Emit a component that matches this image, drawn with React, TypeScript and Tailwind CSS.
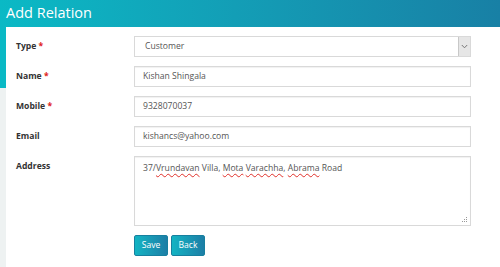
import React from "react";

const Squiggle = ({ children }: { children: React.ReactNode }) => (
  <span className="underline decoration-wavy decoration-[#e0302a] decoration-1 underline-offset-2">{children}</span>
);

function Label({ text, req }: { text: string; req?: boolean }) {
  return (
    <div className="h-[21px] flex items-center text-[8.6px] font-bold text-[#333] whitespace-pre">
      {text}
      {req && <span className="text-[#e02020]"> *</span>}
    </div>
  );
}

function Input({ value }: { value: string }) {
  return (
    <div className="h-[21px] w-[337px] border border-[#d9d9d9] bg-white shadow-[inset_0_1px_1px_rgba(0,0,0,0.06)] flex items-center px-[8px] text-[8.6px] text-[#555]">
      {value}
    </div>
  );
}

export default function App() {
  return (
    <div className="w-[500px] h-[267px] overflow-hidden flex flex-col bg-white" style={{ fontFamily: '"Open Sans", sans-serif' }}>
      <header className="h-[27px] shrink-0 bg-gradient-to-r from-[#0ab9c5] to-[#1880a5] flex items-center px-[6px]">
        <h1 className="text-white text-[14.5px] leading-none">Add Relation</h1>
      </header>
      <div className="flex flex-1">
        <div className="w-[6px] flex flex-col">
          <div className="h-[61px] bg-[#0ab9c5]" />
          <div className="flex-1 bg-[#eef2f2]" />
        </div>
        <main className="flex-1 pt-[9px] pl-[10px]">
          <div className="grid grid-cols-[118px_337px] gap-y-[9px]">
            <Label text="Type" req />
            <div className="h-[21px] w-[337px] border border-[#d9d9d9] bg-white flex items-stretch text-[8.6px] text-[#555]">
              <div className="flex-1 flex items-center pl-[10px]">Customer</div>
              <div className="w-[12px] border-l border-[#c8c8c8] bg-[#e6e6e6] flex items-center justify-center">
                <svg width="7" height="5" viewBox="0 0 7 5">
                  <path d="M0.8 1 L3.5 3.8 L6.2 1" fill="none" stroke="#777" strokeWidth="1" />
                </svg>
              </div>
            </div>

            <Label text="Name" req />
            <Input value="Kishan Shingala" />

            <Label text="Mobile" req />
            <Input value="9328070037" />

            <Label text="Email" />
            <Input value="kishancs@yahoo.com" />

            <Label text="Address" />
            <div className="relative h-[70px] w-[337px] border border-[#d9d9d9] bg-white shadow-[inset_0_1px_1px_rgba(0,0,0,0.06)] px-[8px] pt-[4px] text-[8.6px] text-[#555] leading-[14px]">
              37/<Squiggle>Vrundavan</Squiggle> Villa, <Squiggle>Mota</Squiggle> <Squiggle>Varachha</Squiggle>, <Squiggle>Abrama</Squiggle> Road
              <svg className="absolute right-[2px] bottom-[2px]" width="6" height="6" viewBox="0 0 6 6">
                <rect x="4" y="0" width="1" height="1" fill="#999" />
                <rect x="2" y="2" width="1" height="1" fill="#999" />
                <rect x="4" y="2" width="1" height="1" fill="#999" />
                <rect x="0" y="4" width="1" height="1" fill="#999" />
                <rect x="2" y="4" width="1" height="1" fill="#999" />
                <rect x="4" y="4" width="1" height="1" fill="#999" />
              </svg>
            </div>

            <div />
            <div className="flex gap-[3px]">
              <button className="h-[21px] w-[34px] border border-[#17809f] bg-gradient-to-r from-[#12b4c3] to-[#1c7ea6] text-white text-[8.6px] rounded-[2px]">Save</button>
              <button className="h-[21px] w-[34px] border border-[#17809f] bg-gradient-to-r from-[#12b4c3] to-[#1c7ea6] text-white text-[8.6px] rounded-[2px]">Back</button>
            </div>
          </div>
        </main>
      </div>
    </div>
  );
}
